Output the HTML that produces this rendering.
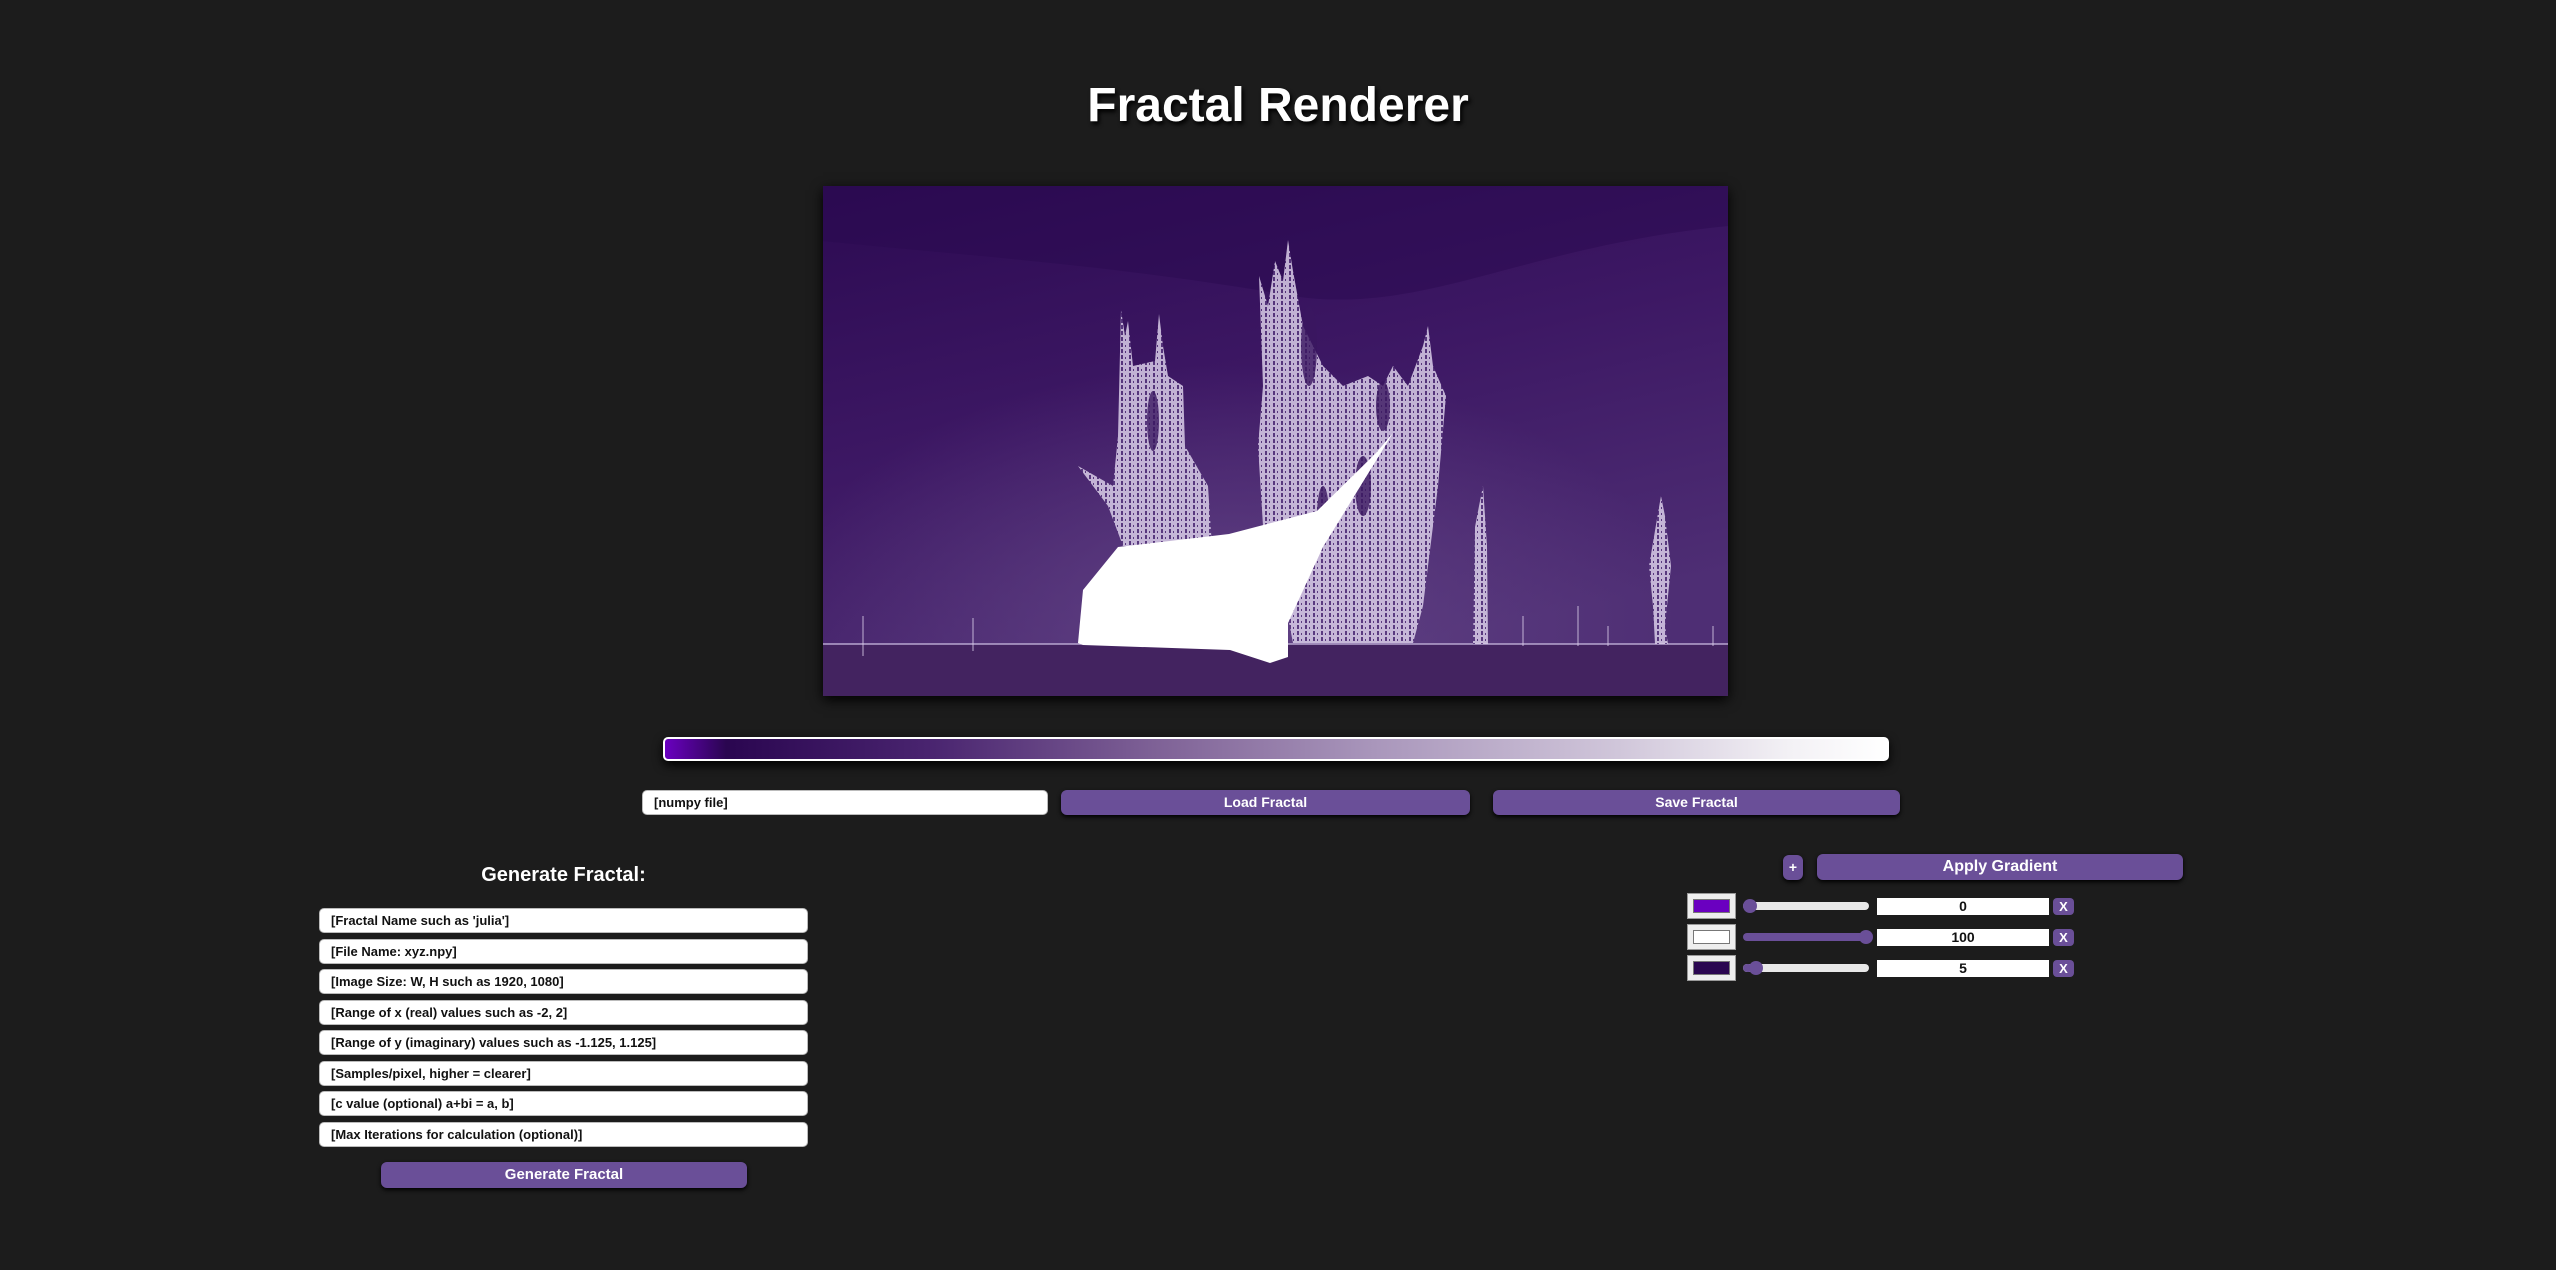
<!DOCTYPE html>
<html><head><meta charset="utf-8"><style>
*{box-sizing:border-box;margin:0;padding:0}
body{width:2556px;height:1270px;background:#1c1c1c;font-family:"Liberation Sans",sans-serif;position:relative;overflow:hidden;color:#fff}
.a{position:absolute}
h1{position:absolute;left:0;width:2556px;top:78px;text-align:center;font-size:48px;font-weight:bold;text-shadow:2px 3px 4px #000;line-height:56px}
.btn{position:absolute;background:#6a4f98;border-radius:6px;color:#fff;font-weight:bold;text-align:center;box-shadow:0 2px 4px #000}
.inp{position:absolute;background:#fff;border-radius:5px;color:#111;font-size:13px;font-weight:bold;padding-left:11px;border:1px solid #bbb}
.sw{position:absolute;width:49px;height:26px;background:#eee;border:1px solid #999}
.sw i{position:absolute;left:5px;top:5px;width:37px;height:14px;border:1px solid #777}
.tr{position:absolute;left:1743px;width:126px;height:8px;border-radius:4px;background:#e8e8e8}
.th{position:absolute;width:14px;height:14px;border-radius:7px;background:#6a4f98;top:-3px}
.num{position:absolute;left:1877px;width:172px;height:17px;background:#fff;color:#111;font-size:14px;font-weight:bold;text-align:center;line-height:17px}
.x{position:absolute;left:2053px;width:21px;height:17px;background:#6a4f98;border-radius:4px;font-size:13px;font-weight:bold;text-align:center;line-height:17px}
</style></head><body>
<h1>Fractal Renderer</h1>
<div class="a" style="left:823px;top:186px;width:905px;height:510px;box-shadow:0 4px 12px #000">
<svg width="905" height="510" viewBox="0 0 905 510">
<defs>
<linearGradient id="bg" x1="0" y1="0" x2="0.4" y2="1"><stop offset="0" stop-color="#2c0a52"/><stop offset="0.5" stop-color="#3d1864"/><stop offset="1" stop-color="#4e2e74"/></linearGradient>
<radialGradient id="gl" cx="0.45" cy="0.85" r="0.5"><stop offset="0" stop-color="#6a4c8c" stop-opacity="0.7"/><stop offset="1" stop-color="#6a4c8c" stop-opacity="0"/></radialGradient>
<pattern id="lace" width="8" height="6" patternUnits="userSpaceOnUse"><rect width="8" height="6" fill="#d9cde8"/><rect x="2" y="1" width="2" height="4" fill="#5a3a80"/><rect x="6" y="3" width="1" height="2" fill="#5a3a80"/></pattern>
</defs>
<rect width="905" height="510" fill="url(#bg)"/>
<path d="M0 0H905V40C700 60 600 130 470 110C300 80 150 70 0 55Z" fill="#2a0950" opacity="0.5"/>
<rect width="905" height="510" fill="url(#gl)"/>
<rect y="458" width="905" height="52" fill="#432360"/>
<line x1="0" y1="458" x2="905" y2="458" stroke="#b8a6d0" stroke-width="1.5"/>
<g fill="url(#lace)" opacity="0.85">
<path d="M298 124L302 150L305 135L310 180L332 175L336 128L340 160L345 190L360 200L362 260L385 300L389 361L300 360L285 320L270 300L255 280L290 300L295 250Z"/>
<path d="M436 90L445 120L452 75L460 95L465 54L470 85L480 140L500 180L520 200L545 190L560 200L570 180L585 200L600 160L605 140L610 180L623 210L615 300L600 420L590 457L470 457L455 380L440 340L435 260L440 200Z"/>
<path d="M652 341L656 320L660 300L664 360L665 458L650 458Z"/>
<path d="M835 327L838 310L842 330L848 380L842 440L845 458L832 458L830 420L826 380Z"/>
</g>
<g fill="#3a1760" opacity="0.8">
<ellipse cx="330" cy="235" rx="6" ry="30"/><ellipse cx="486" cy="160" rx="8" ry="40"/><ellipse cx="540" cy="300" rx="8" ry="30"/><ellipse cx="560" cy="220" rx="7" ry="25"/><ellipse cx="500" cy="330" rx="6" ry="30"/>
</g>
<path d="M255 457L260 404L295 361L406 348L494 325L553 267L570 247L500 361L465 437L465 471L447 477L407 464L260 459Z" fill="#fff"/>
<g stroke="#d8cce8" stroke-width="1.2" opacity="0.7">
<line x1="40" y1="430" x2="40" y2="470"/><line x1="150" y1="432" x2="150" y2="465"/><line x1="755" y1="420" x2="755" y2="460"/><line x1="700" y1="430" x2="700" y2="460"/><line x1="785" y1="440" x2="785" y2="460"/><line x1="890" y1="440" x2="890" y2="460"/>
</g>
</svg></div>
<div class="a" style="left:663px;top:737px;width:1226px;height:24px;border:2px solid #fff;border-radius:5px;background:linear-gradient(90deg,#6a00c0 0%,#2a0650 5%,#4a2570 22%,#7e6196 40%,#a996bb 58%,#d0c6da 78%,#f3f1f5 92%,#fff 100%);box-shadow:0 4px 10px #000"></div>
<div class="inp" style="left:642px;top:790px;width:406px;height:25px;line-height:23px">[numpy file]</div>
<div class="btn" style="left:1061px;top:790px;width:409px;height:25px;line-height:25px;font-size:14px">Load Fractal</div>
<div class="btn" style="left:1493px;top:790px;width:407px;height:25px;line-height:25px;font-size:14px">Save Fractal</div>
<div class="a" style="left:319px;width:489px;top:864px;text-align:center;font-size:20px;font-weight:bold">Generate Fractal:</div>
<div class="inp" style="left:319px;top:908px;width:489px;height:25px;line-height:23px">[Fractal Name such as 'julia']</div>
<div class="inp" style="left:319px;top:939px;width:489px;height:25px;line-height:23px">[File Name: xyz.npy]</div>
<div class="inp" style="left:319px;top:969px;width:489px;height:25px;line-height:23px">[Image Size: W, H such as 1920, 1080]</div>
<div class="inp" style="left:319px;top:1000px;width:489px;height:25px;line-height:23px">[Range of x (real) values such as -2, 2]</div>
<div class="inp" style="left:319px;top:1030px;width:489px;height:25px;line-height:23px">[Range of y (imaginary) values such as -1.125, 1.125]</div>
<div class="inp" style="left:319px;top:1061px;width:489px;height:25px;line-height:23px">[Samples/pixel, higher = clearer]</div>
<div class="inp" style="left:319px;top:1091px;width:489px;height:25px;line-height:23px">[c value (optional) a+bi = a, b]</div>
<div class="inp" style="left:319px;top:1122px;width:489px;height:25px;line-height:23px">[Max Iterations for calculation (optional)]</div>
<div class="btn" style="left:381px;top:1162px;width:366px;height:26px;line-height:26px;font-size:15px">Generate Fractal</div>
<div class="btn" style="left:1783px;top:855px;width:20px;height:25px;line-height:25px;font-size:14px">+</div>
<div class="btn" style="left:1817px;top:854px;width:366px;height:26px;line-height:26px;font-size:16px">Apply Gradient</div>
<div class="sw" style="left:1687px;top:893px"><i style="background:#6a00c0"></i></div>
<div class="tr" style="top:902px"><div class="th" style="left:0"></div></div>
<div class="num" style="top:898px">0</div><div class="x" style="top:898px">X</div>
<div class="sw" style="left:1687px;top:924px"><i style="background:#fff"></i></div>
<div class="tr" style="top:933px;background:#6a4f98"><div class="th" style="left:116px"></div></div>
<div class="num" style="top:929px">100</div><div class="x" style="top:929px">X</div>
<div class="sw" style="left:1687px;top:955px"><i style="background:#2a0650"></i></div>
<div class="tr" style="top:964px"><div style="position:absolute;left:0;width:10px;height:8px;background:#6a4f98;border-radius:4px"></div><div class="th" style="left:6px"></div></div>
<div class="num" style="top:960px">5</div><div class="x" style="top:960px">X</div>
</body></html>
